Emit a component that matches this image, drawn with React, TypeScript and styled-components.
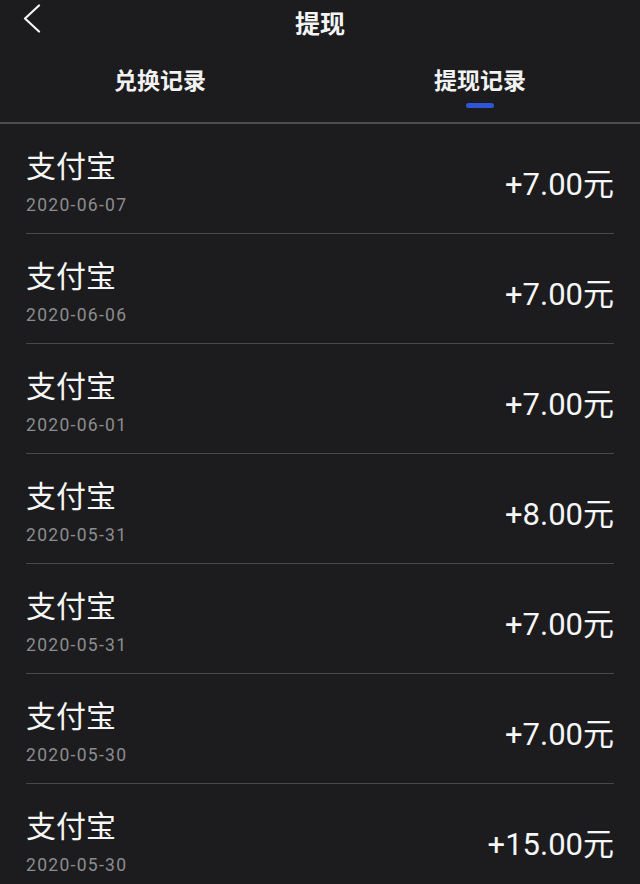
import React from "react";
import styled, { createGlobalStyle } from "styled-components";

interface Record {
    channel: string;
    date: string;
    amount: string;
}

const records: Record[] = [
    { channel: "支付宝", date: "2020-06-07", amount: "+7.00元" },
    { channel: "支付宝", date: "2020-06-06", amount: "+7.00元" },
    { channel: "支付宝", date: "2020-06-01", amount: "+7.00元" },
    { channel: "支付宝", date: "2020-05-31", amount: "+8.00元" },
    { channel: "支付宝", date: "2020-05-31", amount: "+7.00元" },
    { channel: "支付宝", date: "2020-05-30", amount: "+7.00元" },
    { channel: "支付宝", date: "2020-05-30", amount: "+15.00元" },
];

const tabs = ["兑换记录", "提现记录"];

export default function App() {
    const active = 1;

    return (
        <>
            <GlobalStyle />
            <Page>
                <NavBar>
                    <BackButton aria-label="返回">
                        <svg width="18" height="30" viewBox="0 0 18 30" fill="none">
                            <path d="M16 1.5 L2 14.5 L16 27.5" stroke="#f4f4f4" strokeWidth="2.2" strokeLinecap="round" strokeLinejoin="round" />
                        </svg>
                    </BackButton>
                    <Title>提现</Title>
                    <span />
                </NavBar>
                <TabBar>
                    {tabs.map((t, i) => (
                        <Tab key={t}>
                            <TabLabel>{t}</TabLabel>
                            <TabIndicator $active={i === active} />
                        </Tab>
                    ))}
                </TabBar>
                <List>
                    {records.map((r, i) => (
                        <Row key={"rec" + i}>
                            <Left>
                                <Channel>{r.channel}</Channel>
                                <DateText>{r.date}</DateText>
                            </Left>
                            <Amount>{r.amount}</Amount>
                        </Row>
                    ))}
                </List>
            </Page>
        </>
    );
}

const GlobalStyle = createGlobalStyle`
    html, body {
        margin: 0;
        padding: 0;
        background: #1c1c1e;
    }
    body {
        font-family: "Noto Sans CJK SC", "Noto Sans", sans-serif;
        color: #f4f4f4;
        overflow: hidden;
    }
`;

const Page = styled.div`
    width: 640px;
    min-height: 884px;
    background: #1c1c1e;
`;

const NavBar = styled.header`
    height: 44px;
    display: grid;
    grid-template-columns: 1fr auto 1fr;
    align-items: center;
    padding: 0 23px;
`;

const BackButton = styled.button`
    justify-self: start;
    align-self: start;
    margin-top: 4px;
    padding: 0;
    border: none;
    background: none;
    display: flex;
`;

const Title = styled.h1`
    margin: 0;
    font-size: 25px;
    font-weight: 700;
    line-height: 44px;
    color: #f4f4f4;
`;

const TabBar = styled.nav`
    display: flex;
    border-bottom: 2px solid #4e4e50;
`;

const Tab = styled.div`
    flex: 1;
    display: flex;
    flex-direction: column;
    align-items: center;
    padding: 22px 0 14px;
`;

const TabLabel = styled.span`
    font-size: 23px;
    font-weight: 700;
    line-height: 26px;
    color: #f2f2f2;
`;

const TabIndicator = styled.span<{ $active: boolean }>`
    margin-top: 11px;
    width: 28px;
    height: 5px;
    border-radius: 3px;
    background: ${(p) => (p.$active ? "#2f55d4" : "transparent")};
`;

const List = styled.ul`
    list-style: none;
    margin: 0;
    padding: 0;
`;

const Row = styled.li`
    margin: 0 26px;
    padding: 22px 0 17px;
    border-bottom: 1px solid #48484a;
    display: flex;
    justify-content: space-between;
    align-items: center;
`;

const Left = styled.div`
    display: flex;
    flex-direction: column;
`;

const Channel = styled.span`
    font-size: 30px;
    line-height: 36px;
    color: #f6f6f6;
`;

const DateText = styled.span`
    margin-top: 12px;
    font-family: "Roboto", "Liberation Sans", sans-serif;
    font-size: 17.5px;
    line-height: 22px;
    letter-spacing: 1.3px;
    color: #8c8c8e;
`;

const Amount = styled.span`
    padding-top: 7px;
    font-family: "Roboto", "Noto Sans CJK SC", sans-serif;
    font-size: 31px;
    line-height: 36px;
    color: #f6f6f6;
`;
